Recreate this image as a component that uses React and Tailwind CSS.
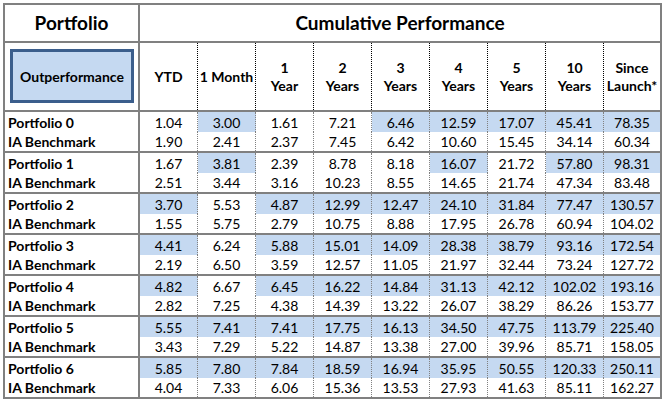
const groups = [
  ["Portfolio 0", [1.04, 3.0, 1.61, 7.21, 6.46, 12.59, 17.07, 45.41, 78.35], [1.9, 2.41, 2.37, 7.45, 6.42, 10.6, 15.45, 34.14, 60.34]],
  ["Portfolio 1", [1.67, 3.81, 2.39, 8.78, 8.18, 16.07, 21.72, 57.8, 98.31], [2.51, 3.44, 3.16, 10.23, 8.55, 14.65, 21.74, 47.34, 83.48]],
  ["Portfolio 2", [3.7, 5.53, 4.87, 12.99, 12.47, 24.1, 31.84, 77.47, 130.57], [1.55, 5.75, 2.79, 10.75, 8.88, 17.95, 26.78, 60.94, 104.02]],
  ["Portfolio 3", [4.41, 6.24, 5.88, 15.01, 14.09, 28.38, 38.79, 93.16, 172.54], [2.19, 6.5, 3.59, 12.57, 11.05, 21.97, 32.44, 73.24, 127.72]],
  ["Portfolio 4", [4.82, 6.67, 6.45, 16.22, 14.84, 31.13, 42.12, 102.02, 193.16], [2.82, 7.25, 4.38, 14.39, 13.22, 26.07, 38.29, 86.26, 153.77]],
  ["Portfolio 5", [5.55, 7.41, 7.41, 17.75, 16.13, 34.5, 47.75, 113.79, 225.4], [3.43, 7.29, 5.22, 14.87, 13.38, 27.0, 39.96, 85.71, 158.05]],
  ["Portfolio 6", [5.85, 7.8, 7.84, 18.59, 16.94, 35.95, 50.55, 120.33, 250.11], [4.04, 7.33, 6.06, 15.36, 13.53, 27.93, 41.63, 85.11, 162.27]],
];

const headers = [
  ["YTD"],
  ["1 Month"],
  ["1", "Year"],
  ["2", "Years"],
  ["3", "Years"],
  ["4", "Years"],
  ["5", "Years"],
  ["10", "Years"],
  ["Since", "Launch*"],
];

function HeadCell({ lines, last }) {
  return (
    <div
      className={
        last
          ? "w-[56px] flex flex-col items-center justify-center leading-[18px]"
          : "w-[58px] flex flex-col items-center justify-center leading-[18px] border-r border-dotted border-black"
      }
    >
      {lines.map((l) => (
        <span key={l}>{l}</span>
      ))}
    </div>
  );
}

function Row({ label, values, compare, bold }) {
  return (
    <div className={bold ? "flex h-[20px]" : "flex h-[19px]"}>
      <div className="w-[135px] border-r-2 border-[#808080] pl-[3px] font-bold flex items-center">{label}</div>
      {values.map((v, i) => {
        const hi = compare && v > compare[i];
        const last = i === values.length - 1;
        return (
          <div
            key={i}
            className={
              (last ? "w-[56px] " : "w-[58px] border-r border-dotted border-[#808080] ") +
              (hi ? "bg-[#c5d9f1] " : "") +
              "flex items-center justify-center"
            }
          >
            {v.toFixed(2)}
          </div>
        );
      })}
    </div>
  );
}

export default function App() {
  return (
    <div className="w-[664px] h-[400px] bg-white pt-[3px] pl-[3px] text-black font-['Lato',sans-serif] text-[14px]">
      <div className="w-[659px] border-2 border-[#808080]">
        <div className="flex h-[38px] border-b-2 border-[#808080] text-[19px] font-bold">
          <div className="w-[135px] border-r-2 border-[#808080] flex items-center justify-center">Portfolio</div>
          <div className="flex-1 flex items-center justify-center">Cumulative Performance</div>
        </div>
        <div className="flex h-[69px] border-b-2 border-[#808080] font-bold">
          <div className="w-[135px] border-r-2 border-[#808080] pt-[6px] pl-[5px]">
            <div className="w-[124px] h-[54px] border-[3px] border-[#3b5e8c] bg-[#c5d9f1] flex items-center justify-center">
              Outperformance
            </div>
          </div>
          {headers.map((h, i) => (
            <HeadCell key={i} lines={h} last={i === headers.length - 1} />
          ))}
        </div>
        {groups.map(([name, p, b], gi) => (
          <div key={name} className={gi === groups.length - 1 ? "" : "border-b-2 border-[#808080]"}>
            <Row label={name} values={p} compare={b} bold />
            <Row label="IA Benchmark" values={b} />
          </div>
        ))}
      </div>
    </div>
  );
}
